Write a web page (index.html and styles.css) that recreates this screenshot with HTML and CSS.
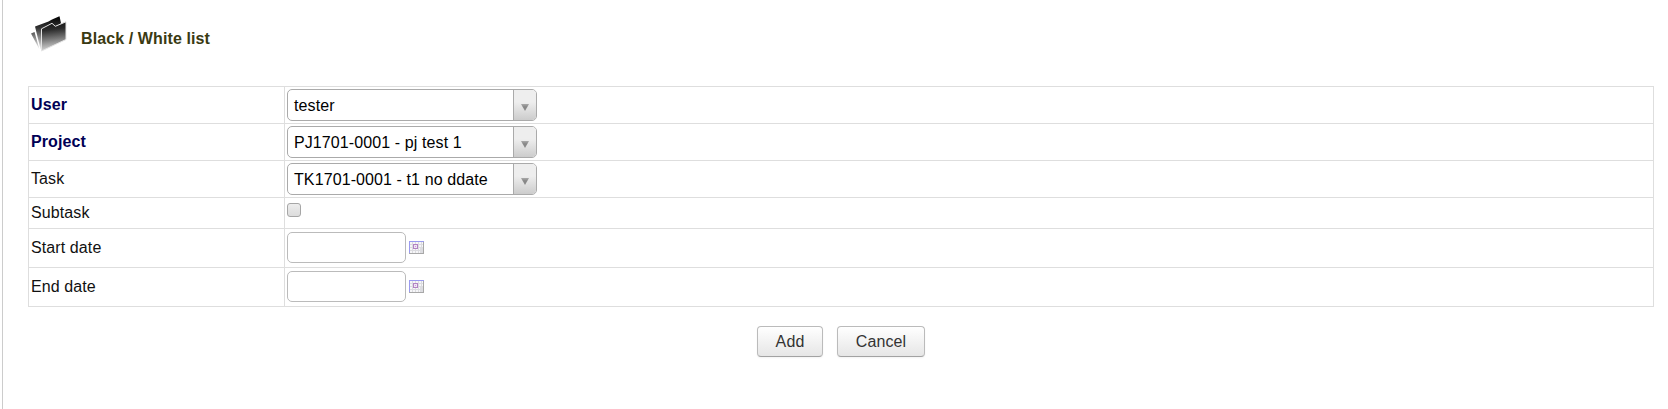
FILE: index.html
```html
<!DOCTYPE html>
<html lang="en">
<head>
<meta charset="utf-8">
<title>Black / White list</title>
<link rel="stylesheet" href="styles.css">
</head>
<body>
<main class="page">
  <header class="heading">
    <svg class="folder" width="38" height="38" viewBox="0 0 38 38">
      <defs>
        <linearGradient id="front" x1="0" y1="0" x2="0.1" y2="1">
          <stop offset="0" stop-color="#111"/><stop offset="0.3" stop-color="#2a2a2a"/><stop offset="0.62" stop-color="#777"/><stop offset="1" stop-color="#d8d8d8"/>
        </linearGradient>
        <linearGradient id="back" x1="0" y1="0" x2="0" y2="1">
          <stop offset="0" stop-color="#000"/><stop offset="0.35" stop-color="#333"/><stop offset="0.7" stop-color="#999"/><stop offset="1" stop-color="#eee"/>
        </linearGradient>
        <linearGradient id="edge" x1="0" y1="0" x2="0" y2="1">
          <stop offset="0" stop-color="#555"/><stop offset="1" stop-color="#f4f4f4"/>
        </linearGradient>
      </defs>
      <path d="M1 18.500 L4.500 17 L9.500 34.500 Z" fill="url(#edge)"/>
      <path d="M5 11.500 L18.500 6.500 L22 4.500 L29.500 1.300 L31 8 L12 34 L10.500 34 Z" fill="url(#back)"/>
      <path d="M11.500 13.800 L22 8.300 L25.300 11.300 L36 6.800 L36 24.500 L11.500 36 Z" fill="url(#front)" stroke="#e4e4e4" stroke-width="1"/>
    </svg>
    <h1 class="title">Black / White list</h1>
  </header>

  <form class="form">
    <div class="row">
      <label class="label required">User</label>
      <div class="field"><div class="select"><span class="value">tester</span><span class="toggle"><span class="arrow"></span></span></div></div>
    </div>
    <div class="row">
      <label class="label required">Project</label>
      <div class="field"><div class="select"><span class="value">PJ1701-0001 - pj test 1</span><span class="toggle"><span class="arrow"></span></span></div></div>
    </div>
    <div class="row">
      <label class="label">Task</label>
      <div class="field"><div class="select"><span class="value">TK1701-0001 - t1 no ddate</span><span class="toggle"><span class="arrow"></span></span></div></div>
    </div>
    <div class="row short">
      <label class="label" for="subtask">Subtask</label>
      <div class="field"><input class="check" type="checkbox" id="subtask"></div>
    </div>
    <div class="row tall">
      <label class="label" for="start">Start date</label>
      <div class="field">
        <input class="date" type="text" id="start">
        <svg class="calendar" width="15" height="13" viewBox="0 0 15 13" shape-rendering="crispEdges">
          <path fill="#f6f6f8" d="M0 0h15v13H0z"/>
          <path fill="#dcdce0" d="M3 1h1v11H3zM6 1h1v11H6zM9 1h1v11H9zM12 1h1v11h-1zM1 3h13v1H1zM1 6h13v1H1zM1 9h13v1H1zM11 7h3v5h-3z"/>
          <path fill="#9a9af0" d="M0 0h15v1H0zM0 0h1v13H0z"/>
          <path fill="#a8a8a8" d="M0 12h15v1H0zM14 1h1v12h-1z"/>
          <path fill="#b283c4" d="M4 3h5v5H4z"/>
          <path fill="#f0e4f4" d="M5 4h3v3H5z"/>
          <path fill="#cba8d8" d="M6 5h1v1H6z"/>
        </svg>
      </div>
    </div>
    <div class="row tall">
      <label class="label" for="end">End date</label>
      <div class="field">
        <input class="date" type="text" id="end">
        <svg class="calendar" width="15" height="13" viewBox="0 0 15 13" shape-rendering="crispEdges">
          <path fill="#f6f6f8" d="M0 0h15v13H0z"/>
          <path fill="#dcdce0" d="M3 1h1v11H3zM6 1h1v11H6zM9 1h1v11H9zM12 1h1v11h-1zM1 3h13v1H1zM1 6h13v1H1zM1 9h13v1H1zM11 7h3v5h-3z"/>
          <path fill="#9a9af0" d="M0 0h15v1H0zM0 0h1v13H0z"/>
          <path fill="#a8a8a8" d="M0 12h15v1H0zM14 1h1v12h-1z"/>
          <path fill="#b283c4" d="M4 3h5v5H4z"/>
          <path fill="#f0e4f4" d="M5 4h3v3H5z"/>
          <path fill="#cba8d8" d="M6 5h1v1H6z"/>
        </svg>
      </div>
    </div>
  </form>

  <div class="actions">
    <button class="button add" type="button">Add</button>
    <button class="button cancel" type="button">Cancel</button>
  </div>
</main>
</body>
</html>
```

FILE: styles.css
```css
* { box-sizing: border-box; }

body {
  margin: 0;
  background: #fff;
  color: #111;
  font: 16px/18px "Liberation Sans", Arial, sans-serif;
  letter-spacing: 0.1px;
}

.page {
  height: 409px;
  margin-left: 2px;
  padding: 15px 14px 0 25px;
  border-left: 1px solid #ccc;
  overflow: hidden;
}

.heading {
  display: flex;
  align-items: flex-start;
  height: 71px;
  padding-left: 2px;
}

.folder { flex: none; }

.title {
  margin: 15px 0 0 13px;
  color: #3a3a12;
  font-size: 16px;
  line-height: 18px;
  font-weight: bold;
}

.form {
  border: 1px solid #dedede;
  border-top: 0;
}

.row {
  display: grid;
  grid-template-columns: 255px 1fr;
  height: 37px;
  border-top: 1px solid #dedede;
}
.row.short { height: 31px; }
.row.tall { height: 39px; }

.label {
  padding: 9px 2px 0;
}
.short .label { padding-top: 6px; }
.tall .label { padding-top: 10px; }

.required {
  color: #000055;
  font-weight: bold;
}

.field {
  display: flex;
  align-items: flex-start;
  padding: 2px 0 0 2px;
  border-left: 1px solid #dedede;
}
.short .field { padding-top: 5px; }
.tall .field { padding-top: 3px; }

.select {
  display: flex;
  width: 250px;
  height: 32px;
  border: 1px solid #aaa;
  border-radius: 5px;
  overflow: hidden;
  color: #000;
}

.value {
  flex: 1;
  padding: 7px 0 0 6px;
  white-space: nowrap;
}

.toggle {
  width: 23px;
  padding: 14px 0 0 7px;
  border-left: 1px solid #aaa;
  background: linear-gradient(#eee 40%, #ccc);
}

.arrow {
  display: block;
  width: 8px;
  height: 7px;
  background: linear-gradient(#aaa, #888 40%);
  clip-path: polygon(0 0, 100% 0, 50% 100%);
}

.check {
  appearance: none;
  width: 14px;
  height: 14px;
  margin: 0;
  border: 1px solid #a6a6a6;
  border-radius: 3px;
  background: linear-gradient(#ededed, #dcdcdc);
}

.date {
  width: 119px;
  height: 31px;
  padding: 0 6px;
  border: 1px solid #bbb;
  border-radius: 5px;
  background: #fff;
  font: inherit;
}

.calendar { margin: 9px 0 0 3px; }

.actions {
  display: flex;
  justify-content: center;
  gap: 14px;
  padding-top: 19px;
}

.button {
  height: 31px;
  padding: 1px 0 0;
  border: 1px solid #bbb;
  border-bottom-color: #a2a2a2;
  border-radius: 4px;
  background: linear-gradient(#fff, #e6e6e6);
  color: #333;
  font: inherit;
  letter-spacing: inherit;
  box-shadow: 0 1px 2px rgba(0, 0, 0, .05);
}
.add { width: 66px; }
.cancel { width: 88px; }
```
